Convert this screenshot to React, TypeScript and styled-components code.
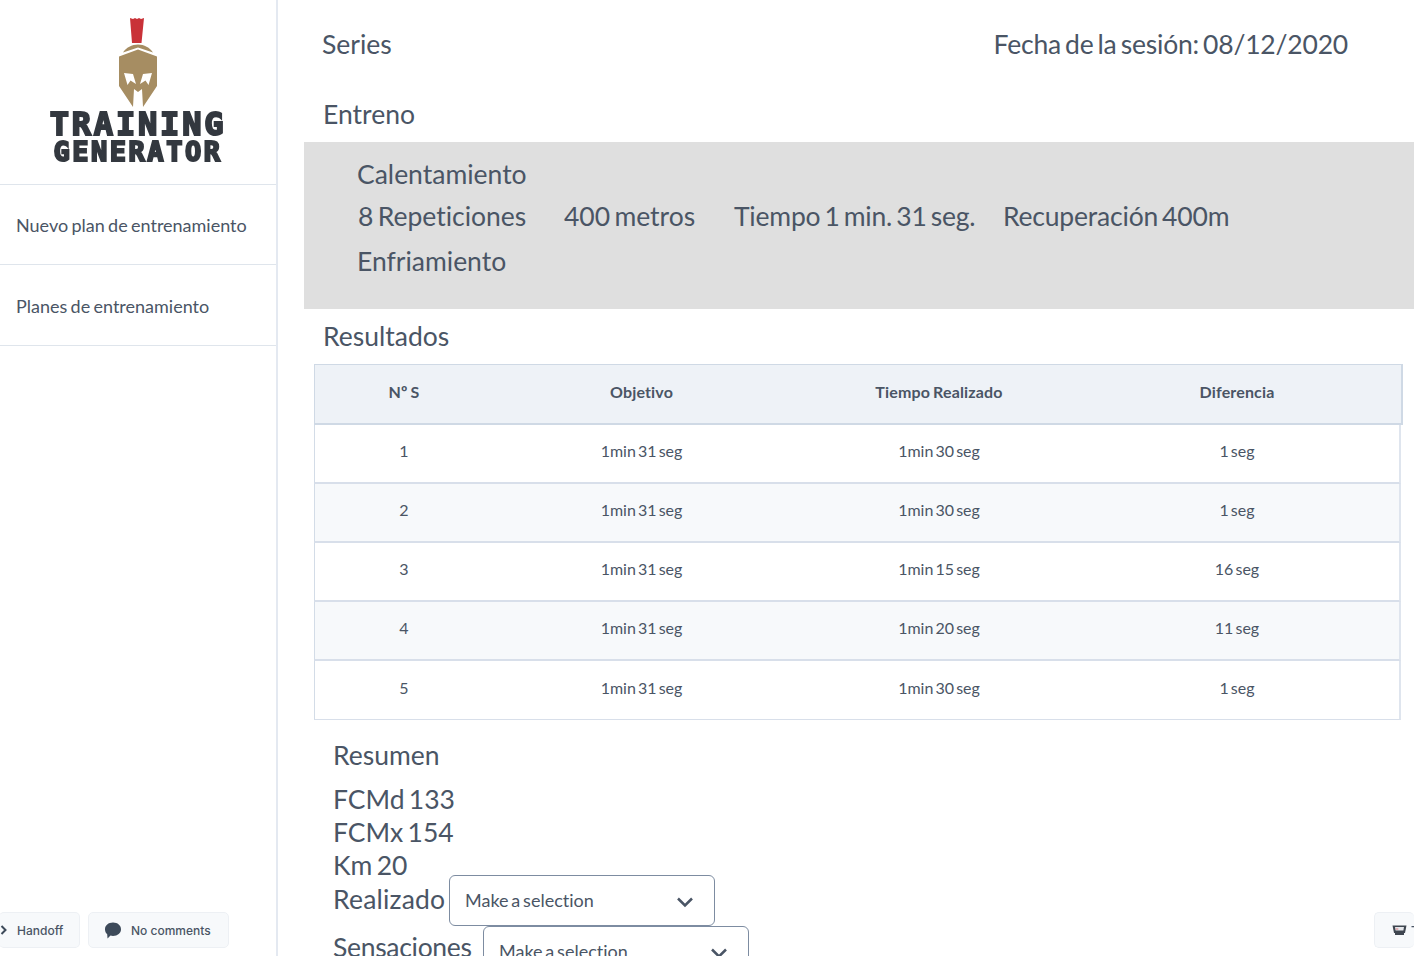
import React from "react";
import styled, { createGlobalStyle } from "styled-components";

const GlobalStyle = createGlobalStyle`
  html, body {
    margin: 0;
    padding: 0;
    height: 100%;
    overflow: hidden;
    background: #fff;
    font-family: Lato, "Open Sans", sans-serif;
    font-variant-ligatures: none;
    color: #4a5565;
  }
  * { box-sizing: border-box; }
`;

const Layout = styled.div`
  display: flex;
  width: 1414px;
  height: 956px;
  overflow: hidden;
`;

const Sidebar = styled.aside`
  flex: 0 0 278px;
  height: 100%;
  border-right: 2px solid #e4e9f1;
`;

const LogoBox = styled.div`
  height: 185px;
  padding-top: 17px;
  border-bottom: 1px solid #dfe5ec;
  display: flex;
  flex-direction: column;
  align-items: center;

  svg {
    flex: none;
    filter: blur(0.4px);
  }
`;

const LogoLine = styled.div<{ $size: number; $height: number; $spacing: number }>`
  font-family: "DejaVu Sans Mono", monospace;
  font-weight: 700;
  font-size: ${({ $size }) => $size}px;
  line-height: ${({ $height }) => $height}px;
  height: ${({ $height }) => $height}px;
  letter-spacing: ${({ $spacing }) => $spacing}px;
  color: #33383f;
  -webkit-text-stroke: 2px #33383f;
  white-space: nowrap;
  filter: blur(0.4px);
`;

const NavItem = styled.a`
  display: flex;
  align-items: center;
  height: 80px;
  padding-left: 16px;
  border-bottom: 1px solid #dfe5ec;
  font-size: 18px;
  word-spacing: -1.3px;
  color: #4a5565;

  & + & {
    height: 81px;
    padding-top: 1px;
  }
`;

const Main = styled.main`
  flex: 1;
  padding-left: 26px;
  min-width: 0;
`;

const TitleRow = styled.div`
  display: flex;
  justify-content: space-between;
  height: 88px;
  padding: 26px 66px 0 18px;
`;

const Title = styled.h2<{ $indent?: number }>`
  margin: 0;
  padding-left: ${({ $indent }) => $indent ?? 0}px;
  font-size: 26.500px;
  word-spacing: -2.500px;
  line-height: 37px;
  font-weight: 400;
  color: #4a5565;
`;

const DateTitle = styled(Title)`
  letter-spacing: -0.2px;
`;

const EntrenoHead = styled(Title)`
  height: 54px;
  padding-top: 8px;
`;

const WorkoutBox = styled.section`
  height: 167px;
  background: #dfdfdf;
  padding: 14px 0 0 53px;
  font-size: 26.500px;
  word-spacing: -2.500px;
  color: #4a5565;
`;

const WorkoutLine = styled.div<{ $height: number }>`
  display: flex;
  height: ${({ $height }) => $height}px;
  line-height: 37px;
`;

const WorkoutCell = styled.span<{ $width?: number; $indent?: number; $tight?: boolean }>`
  flex: 0 0 ${({ $width }) => ($width ? `${$width}px` : "auto")};
  padding-left: ${({ $indent }) => $indent ?? 0}px;
  letter-spacing: ${({ $tight }) => ($tight ? "-0.2px" : "0")};
  white-space: nowrap;
`;

const ResultsHead = styled(Title)`
  height: 55px;
  padding-top: 9px;
`;

const Table = styled.div`
  margin-left: 10px;
  width: 1089px;
`;

const gridColumns = "178px 297px 298px 298px 1fr";

const HeadRow = styled.div`
  display: grid;
  grid-template-columns: ${gridColumns};
  align-items: center;
  height: 61px;
  padding-bottom: 5px;
  background: #eef2f7;
  border: 1px solid #cfd9e5;
  border-bottom-width: 2px;
  border-right-width: 2px;
  font-size: 16px;
  font-weight: 700;
  letter-spacing: 0.15px;
  word-spacing: -1px;
  color: #4a5565;
  text-align: center;
`;

const BodyRow = styled.div<{ $striped: boolean }>`
  display: grid;
  grid-template-columns: ${gridColumns};
  align-items: center;
  width: 1087px;
  height: 59px;
  padding-bottom: 6px;
  background: ${({ $striped }) => ($striped ? "#f7f9fb" : "#fff")};
  border-left: 1px solid #d3dce7;
  border-right: 2px solid #dfe5ee;
  border-bottom: 2px solid #d8dfea;
  font-size: 16px;
  word-spacing: -2px;
  color: #4a5565;
  text-align: center;

  &:last-child {
    border-bottom-width: 1px;
  }
`;

const Summary = styled.section`
  padding: 17px 0 0 29px;
`;

const SummaryTitle = styled(Title)`
  height: 46px;
`;

const StatList = styled.div`
  margin-bottom: -7px;
`;

const Stat = styled.div`
  font-size: 26.500px;
  word-spacing: -2.500px;
  line-height: 33px;
  height: 33px;
  color: #4a5565;
`;

const FieldRow = styled.div`
  display: flex;
  align-items: flex-start;
  height: 51px;
`;

const FieldLabel = styled.label<{ $width: number; $height: number; $spacing: number }>`
  flex: 0 0 ${({ $width }) => $width}px;
  font-size: 26.500px;
  letter-spacing: ${({ $spacing }) => $spacing}px;
  line-height: ${({ $height }) => $height}px;
  color: #4a5565;
`;

const SelectBox = styled.div`
  display: flex;
  align-items: center;
  justify-content: space-between;
  width: 266px;
  height: 51px;
  padding: 0 19px 2px 15px;
  border: 1px solid #7d8ca1;
  border-radius: 6px;
  background: #fff;
  font-size: 18px;
  word-spacing: -1.800px;
  color: #4a5565;

  svg {
    margin-top: 4px;
  }
`;

const Floating = styled.div<{ $left: number; $width: number }>`
  position: fixed;
  top: 912px;
  left: ${({ $left }) => $left}px;
  width: ${({ $width }) => $width}px;
  height: 36px;
  display: flex;
  align-items: center;
  background: #f7f9fb;
  border: 1px solid #edf0f4;
  border-radius: 5px;
  font-family: Inter, sans-serif;
  font-size: 12px;
  font-weight: 500;
  color: #4a5565;
  white-space: nowrap;
  overflow: hidden;

  svg {
    flex: none;
  }
`;

const HandoffButton = styled(Floating)`
  gap: 10px;
  padding-left: 1px;
  border-left: none;
`;

const CommentsButton = styled(Floating)`
  gap: 9px;
  padding-left: 15px;
`;

const TourButton = styled(Floating)`
  gap: 4px;
  padding-left: 17px;
  border-right: none;
`;

const Helmet = () => (
  <svg width="38" height="90" viewBox="0 0 38 90" aria-hidden="true">
    <path d="M11 1l3 1 2-1 2 1 2-1 2 1 3-1-2.500 25h-9.500z" fill="#c93238" />
    <path d="M4 35.500c3-5 9-8 15-8s12 3 15 8l-15-5z" fill="#a68d62" />
    <path
      d="M0 39.500l19-7 19 7v29.500l-14 21-1-18-4 3-4-3-1 18-14-21z"
      fill="#a68d62"
    />
    <path d="M5 56l9 1 3 10-5.500-3.500-3 4.500z" fill="#fff" />
    <path d="M33 56l-9 1-3 10 5.500-3.500 3 4.500z" fill="#fff" />
  </svg>
);

const Chevron = () => (
  <svg width="20" height="20" viewBox="0 0 20 20" fill="none" aria-hidden="true">
    <path d="M3 6.500 10 13.500l7-7" stroke="#4a5565" strokeWidth="2.500" />
  </svg>
);

const HandoffIcon = () => (
  <svg width="7" height="10" viewBox="0 0 7 10" fill="none" aria-hidden="true">
    <path d="M1.500 1 5.500 5l-4 4" stroke="#3d4a5a" strokeWidth="2" />
  </svg>
);

const CommentIcon = () => (
  <svg width="18" height="17" viewBox="0 0 18 17" aria-hidden="true">
    <path
      d="M9 .5c4.600 0 8 2.900 8 6.700s-3.400 6.700-8 6.700c-.9 0-1.700-.1-2.500-.3L3.500 16.500l-.3-4.200C1.800 11.100 1 9.300 1 7.200 1 3.400 4.400.5 9 .5z"
      fill="#3d4a5a"
    />
  </svg>
);

const TourIcon = () => (
  <svg width="15" height="12" viewBox="0 0 15 12" aria-hidden="true">
    <path d="M.5 1.500h14l-1.500 7.500h-11z" fill="#3f4650" />
    <path d="M3 3h9l-.6 3.500h-7.800z" fill="#e6e8ec" />
    <path d="M3.800 4.500h2.500v1h-2.500z" fill="#d9747a" />
    <path d="M3 9h9v2h-9z" fill="#3f4650" />
  </svg>
);

const rows = [
  ["1", "1min 31 seg", "1min 30 seg", "1 seg"],
  ["2", "1min 31 seg", "1min 30 seg", "1 seg"],
  ["3", "1min 31 seg", "1min 15 seg", "16 seg"],
  ["4", "1min 31 seg", "1min 20 seg", "11 seg"],
  ["5", "1min 31 seg", "1min 30 seg", "1 seg"],
];

const App: React.FC = () => (
  <Layout>
    <GlobalStyle />
    <Sidebar>
      <LogoBox>
        <Helmet />
        <LogoLine $size={32} $height={34} $spacing={2.800}>TRAINING</LogoLine>
        <LogoLine $size={27} $height={22} $spacing={2.500}>GENERATOR</LogoLine>
      </LogoBox>
      <NavItem>Nuevo plan de entrenamiento</NavItem>
      <NavItem>Planes de entrenamiento</NavItem>
    </Sidebar>
    <Main>
      <TitleRow>
        <Title>Series</Title>
        <DateTitle>Fecha de la sesión: 08/12/2020</DateTitle>
      </TitleRow>
      <EntrenoHead $indent={19}>Entreno</EntrenoHead>
      <WorkoutBox>
        <WorkoutLine $height={42}>Calentamiento</WorkoutLine>
        <WorkoutLine $height={45}>
          <WorkoutCell $width={207} $indent={1}>8 Repeticiones</WorkoutCell>
          <WorkoutCell $width={170}>400 metros</WorkoutCell>
          <WorkoutCell $width={269} $tight>Tiempo 1 min. 31 seg.</WorkoutCell>
          <WorkoutCell $tight>Recuperación 400m</WorkoutCell>
        </WorkoutLine>
        <WorkoutLine $height={37}>Enfriamiento</WorkoutLine>
      </WorkoutBox>
      <ResultsHead $indent={19}>Resultados</ResultsHead>
      <Table>
        <HeadRow>
          <span>Nº S</span>
          <span>Objetivo</span>
          <span>Tiempo Realizado</span>
          <span>Diferencia</span>
        </HeadRow>
        {rows.map((row, i) => (
          <BodyRow key={row[0]} $striped={i % 2 === 1}>
            {row.map((cell, j) => (
              <span key={j}>{cell}</span>
            ))}
          </BodyRow>
        ))}
      </Table>
      <Summary>
        <SummaryTitle>Resumen</SummaryTitle>
        <StatList>
          <Stat>FCMd 133</Stat>
          <Stat>FCMx 154</Stat>
          <Stat>Km 20</Stat>
        </StatList>
        <FieldRow>
          <FieldLabel $width={116} $height={48} $spacing={0.2}>Realizado</FieldLabel>
          <SelectBox>
            Make a selection
            <Chevron />
          </SelectBox>
        </FieldRow>
        <FieldRow>
          <FieldLabel $width={150} $height={42} $spacing={-0.3}>Sensaciones</FieldLabel>
          <SelectBox>
            Make a selection
            <Chevron />
          </SelectBox>
        </FieldRow>
      </Summary>
    </Main>
    <HandoffButton $left={-1} $width={81}>
      <HandoffIcon />
      Handoff
    </HandoffButton>
    <CommentsButton $left={88} $width={141}>
      <CommentIcon />
      No comments
    </CommentsButton>
    <TourButton $left={1374} $width={40}>
      <TourIcon />
      T
    </TourButton>
  </Layout>
);

export default App;
